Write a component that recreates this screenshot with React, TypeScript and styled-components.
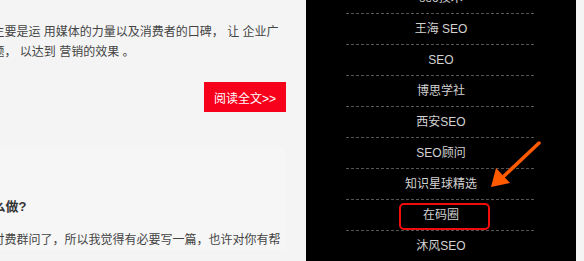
import React from "react";
import styled, { createGlobalStyle } from "styled-components";

const Global = createGlobalStyle`
  html, body { margin: 0; padding: 0; }
  body {
    background: #f4f4f4;
    font-family: "Liberation Sans", "Noto Sans CJK SC", sans-serif;
  }
`;

const Page = styled.div`
  display: flex;
  height: 261px;
  overflow: hidden;
  background: #f4f4f4;
`;

const Main = styled.div`
  width: 286px;
  margin-right: 20px;
  flex: none;
  overflow: hidden;
  display: flex;
  flex-direction: column;
`;

const Article = styled.section<{ $tint?: boolean }>`
  flex: none;
  height: ${(p) => (p.$tint ? "auto" : "147px")};
  box-sizing: border-box;
  padding-top: ${(p) => (p.$tint ? "50px" : "22px")};
  background: ${(p) => (p.$tint ? "#f6f6f6" : "transparent")};
  margin-right: ${(p) => (p.$tint ? "1px" : "0")};
`;

const Excerpt = styled.p`
  margin: 0 0 0 -7.5px;
  font-size: 12px;
  line-height: 20px;
  color: #444;
  white-space: nowrap;
`;

const MoreRow = styled.div`
  display: flex;
  justify-content: flex-end;
  margin-top: 20px;
`;

const MoreButton = styled.a`
  display: flex;
  align-items: center;
  justify-content: center;
  width: 82px;
  height: 30px;
  background: #f7001b;
  color: #fff;
  font-size: 12px;
  text-decoration: none;
`;

const Title = styled.h3`
  margin: 0 0 13px -7.5px;
  font-size: 13px;
  line-height: 20px;
  font-weight: bold;
  color: #333;
  white-space: nowrap;
`;

const Sidebar = styled.aside`
  position: relative;
  width: 270px;
  flex: none;
  background: #000;
  overflow: hidden;
`;

const LinkList = styled.ul`
  list-style: none;
  margin: -18px 40px 0;
  padding: 0;
`;

const LinkItem = styled.li`
  position: relative;
  height: 31px;
  box-sizing: border-box;
  padding-top: 1px;
  line-height: 30px;
  text-align: center;
  font-size: 12px;
  color: #d2d2d2;
  &::before {
    content: "";
    position: absolute;
    left: 0;
    right: 0;
    top: 0;
    height: 1px;
    background: repeating-linear-gradient(
      to right,
      #555 0 3px,
      transparent 3px 5px
    );
  }
`;

const Highlight = styled.div`
  position: absolute;
  left: 93px;
  top: 203px;
  width: 91px;
  height: 27px;
  box-sizing: border-box;
  border: 2px solid #f20d0d;
  border-radius: 5px;
`;

const ArrowLayer = styled.svg`
  position: absolute;
  left: 0;
  top: 0;
  width: 270px;
  height: 261px;
  pointer-events: none;
`;

const links = [
  "seo技术",
  "王海 SEO",
  "SEO",
  "博思学社",
  "西安SEO",
  "SEO顾问",
  "知识星球精选",
  "在码圈",
  "沐风SEO",
];

export default function App() {
  return (
    <>
      <Global />
      <Page>
        <Main>
          <Article>
            <Excerpt>
              主要是运 用媒体的力量以及消费者的口碑， 让 企业广
              <br />
              题， 以达到 营销的效果 。
            </Excerpt>
            <MoreRow>
              <MoreButton href="#">阅读全文&gt;&gt;</MoreButton>
            </MoreRow>
          </Article>
          <Article $tint>
            <Title>么做?</Title>
            <Excerpt>付费群问了，所以我觉得有必要写一篇，也许对你有帮</Excerpt>
          </Article>
        </Main>
        <Sidebar>
          <LinkList>
            {links.map((l) => (
              <LinkItem key={l}>{l}</LinkItem>
            ))}
          </LinkList>
          <Highlight />
          <ArrowLayer viewBox="0 0 270 261">
            <line
              x1="233"
              y1="143"
              x2="197"
              y2="177"
              stroke="#ff5a00"
              strokeWidth="3.5"
              strokeLinecap="round"
            />
            <polygon points="185,187 190,168 204,183" fill="#ff5a00" />
          </ArrowLayer>
        </Sidebar>
      </Page>
    </>
  );
}
